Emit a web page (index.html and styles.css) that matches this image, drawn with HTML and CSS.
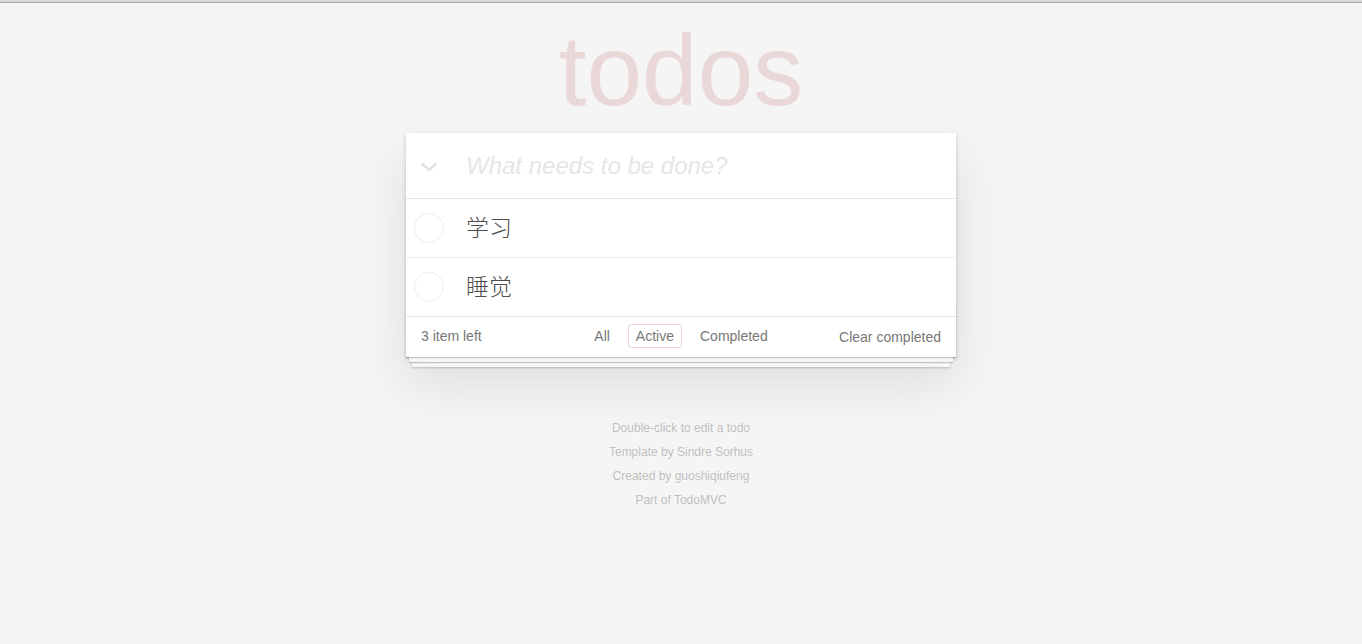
FILE: index.html
```html
<!DOCTYPE html>
<html lang="zh">
<head>
<meta charset="utf-8">
<title>Todos</title>
<link rel="stylesheet" href="styles.css">
</head>
<body>
<div class="topline"></div>
<div class="page">
  <h1 class="title">todos</h1>
  <section class="todoapp">
    <header class="header">
      <span class="toggle-all">
        <svg width="18" height="10" viewBox="0 0 18 10"><polyline points="1.5,1.5 9,8 16.5,1.5" fill="none" stroke="#e3e3e3" stroke-width="2.6" stroke-linejoin="miter"/></svg>
      </span>
      <input class="new-todo" placeholder="What needs to be done?">
    </header>
    <section class="main">
      <ul class="todo-list">
        <li class="todo"><span class="toggle"></span><label class="todo-label">学习</label></li>
        <li class="todo"><span class="toggle"></span><label class="todo-label">睡觉</label></li>
      </ul>
    </section>
    <footer class="footer">
      <span class="todo-count">3 item left</span>
      <ul class="filters">
        <li><a class="filter">All</a></li>
        <li><a class="filter selected">Active</a></li>
        <li><a class="filter">Completed</a></li>
      </ul>
      <span class="clear-completed">Clear completed</span>
    </footer>
  </section>
  <footer class="info">
    <p>Double-click to edit a todo</p>
    <p>Template by Sindre Sorhus</p>
    <p>Created by guoshiqiufeng</p>
    <p>Part of TodoMVC</p>
  </footer>
</div>
</body>
</html>
```
FILE: styles.css
```css
html, body {
  margin: 0;
  padding: 0;
}
body {
  background: #f5f5f5;
  font-family: "Liberation Sans", Arial, "Noto Sans CJK SC", sans-serif;
  font-size: 14px;
  color: #4d4d4d;
}
.topline {
  height: 2px;
  background: #d9d9d9;
  border-bottom: 1px solid #a9a9a9;
}
.page {
  width: 550px;
  margin: 0 auto;
}
.title {
  margin: 17px 0 13px;
  font-size: 100px;
  line-height: 100px;
  font-weight: 100;
  text-align: center;
  color: rgba(175, 47, 47, 0.15);
}
.todoapp {
  background: #fff;
  position: relative;
  box-shadow: 0 2px 4px 0 rgba(0, 0, 0, 0.2), 0 25px 50px 0 rgba(0, 0, 0, 0.1);
}
.header {
  display: flex;
  align-items: center;
  height: 65px;
}
.toggle-all {
  width: 60px;
  flex: none;
  display: flex;
  align-items: center;
  padding-left: 14px;
  box-sizing: border-box;
  padding-top: 2px;
}
.new-todo {
  flex: 1;
  min-width: 0;
  height: 65px;
  box-sizing: border-box;
  border: none;
  outline: none;
  background: transparent;
  padding: 0 16px 0 0;
  font-family: "Liberation Sans", Arial, sans-serif;
  font-size: 24px;
  color: #4d4d4d;
}
.new-todo::placeholder {
  font-style: italic;
  color: #e6e6e6;
}
.main {
  border-top: 1px solid #e6e6e6;
}
.todo-list {
  list-style: none;
  margin: 0;
  padding: 0;
}
.todo {
  display: flex;
  align-items: center;
  height: 58px;
  border-bottom: 1px solid #ededed;
}
.todo:last-child {
  border-bottom: none;
}
.toggle {
  width: 30px;
  height: 30px;
  box-sizing: border-box;
  border: 1px solid #ededed;
  border-radius: 50%;
  margin-left: 8px;
  flex: none;
}
.todo-label {
  padding-left: 22px;
  padding-bottom: 4px;
  font-family: "Noto Sans CJK SC", sans-serif;
  font-size: 23px;
  font-weight: 300;
  line-height: 28px;
  color: #4d4d4d;
}
.footer {
  position: relative;
  border-top: 1px solid #e6e6e6;
  padding: 10px 15px;
  height: 20px;
  color: #777;
  display: grid;
  grid-template-columns: 1fr auto 1fr;
  grid-template-rows: 20px;
  align-items: center;
  line-height: 20px;
}
.footer::before {
  content: '';
  position: absolute;
  right: 0;
  bottom: 0;
  left: 0;
  height: 50px;
  overflow: hidden;
  box-shadow: 0 1px 1px rgba(0, 0, 0, 0.2),
    0 8px 0 -3px #f6f6f6,
    0 9px 1px -3px rgba(0, 0, 0, 0.2),
    0 16px 0 -6px #f6f6f6,
    0 17px 2px -6px rgba(0, 0, 0, 0.2);
}
.todo-count {
  justify-self: start;
  position: relative;
  top: -1px;
}
.filters {
  list-style: none;
  margin: 0;
  padding: 0;
  display: flex;
  align-items: center;
  height: 20px;
  gap: 4px;
  position: relative;
  top: -1px;
}
.filter {
  display: inline-block;
  margin: 0 3px;
  padding: 1px 7px;
  line-height: 20px;
  border: 1px solid transparent;
  border-radius: 3px;
  color: inherit;
}
.filter.selected {
  border-color: rgba(175, 47, 47, 0.2);
}
.clear-completed {
  justify-self: end;
  position: relative;
  top: 0;
}
.info {
  margin-top: 59px;
  text-align: center;
  color: #bfbfbf;
  font-size: 12px;
  text-shadow: 0 1px 0 rgba(255, 255, 255, 0.5);
}
.info p {
  margin: 0;
  line-height: 24px;
}
```
